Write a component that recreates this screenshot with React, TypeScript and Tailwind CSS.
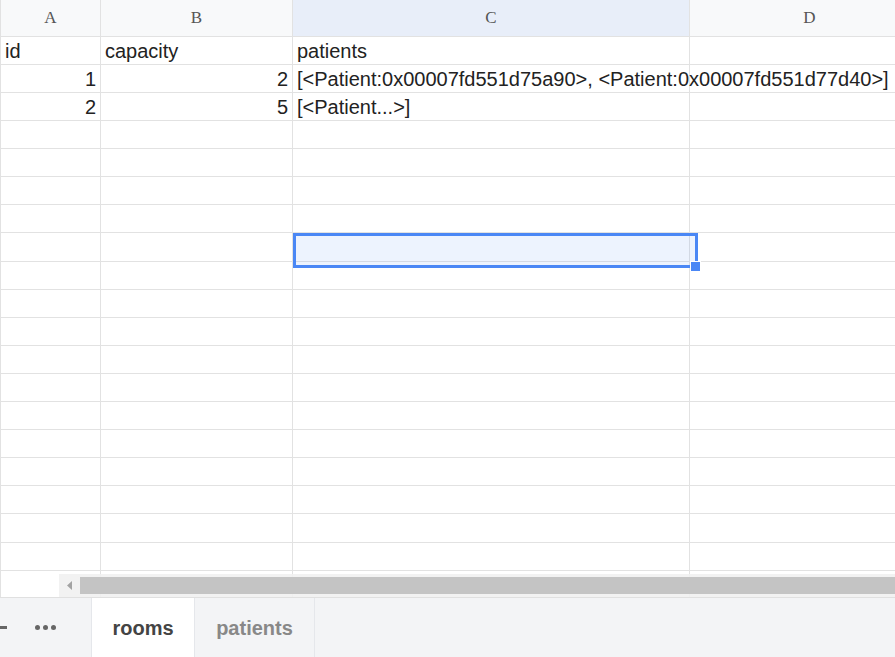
import React from 'react';

const cols = [
  { key: 'A', w: 'w-[100px]' },
  { key: 'B', w: 'w-[192px]' },
  { key: 'C', w: 'w-[397px]' },
  { key: 'D', w: 'w-[240px]' },
];

const rowHeights = [28, 28, 28, 28, 28, 28, 28, 29, 28, 28, 28, 28, 28, 28, 28, 28, 28, 29, 28];

const data: Record<number, string[]> = {
  0: ['id', 'capacity', 'patients', ''],
  1: ['1', '2', '[<Patient:0x00007fd551d75a90>, <Patient:0x00007fd551d77d40>]', ''],
  2: ['2', '5', '[<Patient...>]', ''],
};

function Cell({ w, text, right, h }: { w: string; text: string; right: boolean; h: number }) {
  return (
    <div
      className={`${w} shrink-0 border-r border-b border-[#e2e2e2] box-border flex items-end pb-[3px] px-[4px] text-[20px] leading-none text-[#222] whitespace-nowrap overflow-visible ${right ? 'justify-end' : 'justify-start'}`}
      style={{ height: h }}
    >
      {text}
    </div>
  );
}

export default function App() {
  return (
    <div className="w-[895px] h-[657px] overflow-hidden bg-white flex flex-col relative" style={{ fontFamily: '"Liberation Sans", Arial, sans-serif' }}>
      <div className="relative flex-1 overflow-hidden border-l border-[#e2e2e2]">
        {/* column header */}
        <div className="flex h-[37px]">
          {cols.map((c) => (
            <div
              key={c.key}
              className={`${c.w} shrink-0 border-r border-b border-[#e2e2e2] flex items-center justify-center text-[17px] text-[#555] ${c.key === 'C' ? 'bg-[#e8eef9]' : 'bg-[#f8f9fa]'}`}
              style={{ fontFamily: '"Liberation Serif", "Times New Roman", serif' }}
            >
              {c.key}
            </div>
          ))}
        </div>
        {rowHeights.map((h, i) => (
          <div key={i} className="flex">
            {cols.map((c, j) => {
              const text = data[i]?.[j] ?? '';
              const right = i > 0 && (j === 0 || j === 1);
              return <Cell key={c.key} w={c.w} text={text} right={right} h={h} />;
            })}
          </div>
        ))}
        <div className="flex h-[40px]">
          {cols.map((c) => (
            <div key={c.key} className={`${c.w} shrink-0 border-r border-[#e2e2e2]`} />
          ))}
        </div>

        {/* selection */}
        <div className="absolute left-[292px] top-[233px] w-[405px] h-[35px] border-[3px] border-[#4a87f5] bg-[#4a87f5]/10" />
        <div className="absolute left-[690px] top-[262px] w-[9px] h-[9px] bg-[#4a87f5] border border-white box-content -translate-x-[1px] -translate-y-[1px]" />

        {/* horizontal scrollbar */}
        <div className="absolute left-[58px] right-0 bottom-0 h-[23px] bg-[#f1f1f1]/90 flex items-center">
          <div className="w-[21px] flex items-center justify-center">
            <svg width="6" height="9" viewBox="0 0 6 9">
              <path d="M5 0 L0 4.5 L5 9 Z" fill="#a3a3a3" />
            </svg>
          </div>
          <div className="flex-1 h-[17px] bg-[#c1c1c1]/95" />
        </div>
      </div>

      {/* sheet tabs */}
      <div className="h-[60px] shrink-0 bg-[#f3f4f6] border-t border-[#e0e0e0] flex items-stretch">
        <div className="w-[91px] flex items-center relative">
          <div className="absolute left-0 w-[7px] h-[3px] bg-[#666]" />
          <div className="ml-[35px] flex gap-[3px]">
            <span className="w-[5px] h-[5px] rounded-full bg-[#666]" />
            <span className="w-[5px] h-[5px] rounded-full bg-[#666]" />
            <span className="w-[5px] h-[5px] rounded-full bg-[#666]" />
          </div>
        </div>
        <div className="w-[104px] bg-white border-l border-r border-[#e5e7eb] flex items-center justify-center text-[20px] font-bold text-[#444]">
          rooms
        </div>
        <div className="w-[120px] border-r border-[#e5e7eb] flex items-center justify-center text-[20px] font-bold text-[#888]">
          patients
        </div>
      </div>
    </div>
  );
}
